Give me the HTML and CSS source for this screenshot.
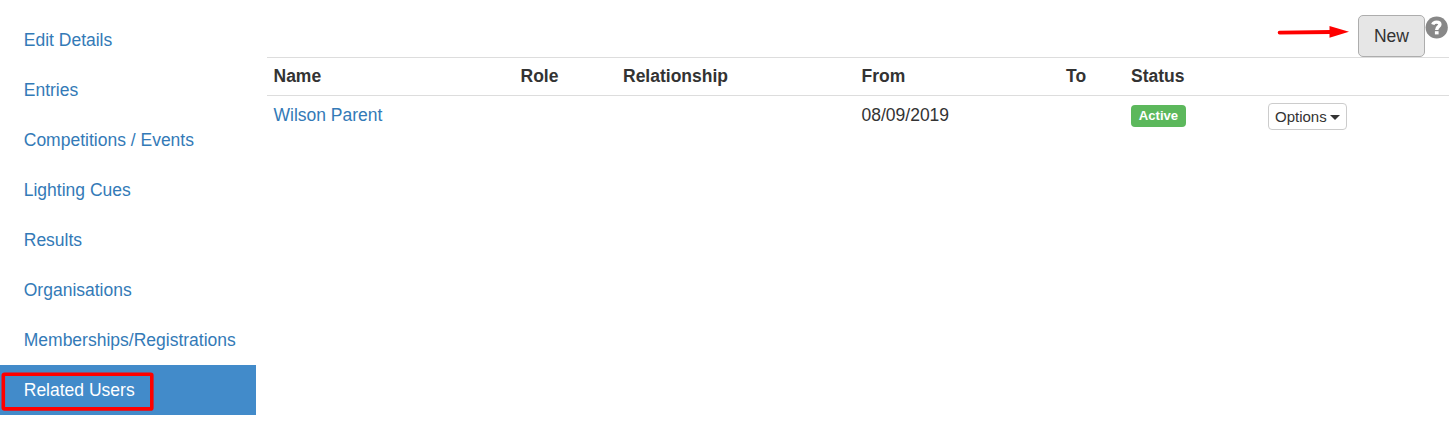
FILE: index.html
```
<!DOCTYPE html>
<html lang="en">
<head>
  <meta charset="UTF-8" />
  <meta name="viewport" content="width=device-width, initial-scale=1.0"/>
  <title>Related Users</title>
  <link rel="stylesheet" href="styles.css">
</head>
<body>
  <div class="page">
    <nav class="sidebar">
      <a href="#">Edit Details</a>
      <a href="#">Entries</a>
      <a href="#">Competitions / Events</a>
      <a href="#">Lighting Cues</a>
      <a href="#">Results</a>
      <a href="#">Organisations</a>
      <a href="#">Memberships/Registrations</a>
      <a href="#" class="active">Related Users
        <svg class="marker" width="153" height="40" viewBox="0 0 153 40">
          <rect x="2.3" y="2.3" width="148.5" height="34.6" rx="1" fill="none" stroke="#fe0000" stroke-width="3.6"/>
        </svg>
      </a>
    </nav>

    <main class="content">
      <div class="toolbar">
        <svg class="arrow" width="72" height="14" viewBox="0 0 72 14">
          <path d="M2.6 7.6 L54 7" stroke="#fe0000" stroke-width="3.8" stroke-linecap="round"/>
          <path d="M52.5 1 L72 6.7 L52.5 12.8 Z" fill="#fe0000"/>
        </svg>
        <button class="btn btn-new">New</button>
        <svg class="help" width="23" height="23" viewBox="0 0 23 23">
          <circle cx="11.7" cy="11.5" r="11.1" fill="#888"/>
          <path d="M7.8 8.6 C8.3 6.9 9.6 6.1 11.6 6.1 C13.9 6.1 14.9 7.1 14.9 8.5 C14.9 10.8 11.7 10.6 11.7 13.9" fill="none" stroke="#fff" stroke-width="3.4"/>
          <rect x="9.9" y="15.2" width="3.7" height="3.2" fill="#fff"/>
        </svg>
      </div>

      <table class="table">
        <thead>
          <tr>
            <th class="col-name">Name</th>
            <th class="col-role">Role</th>
            <th class="col-relationship">Relationship</th>
            <th class="col-from">From</th>
            <th class="col-to">To</th>
            <th class="col-status">Status</th>
            <th></th>
          </tr>
        </thead>
        <tbody>
          <tr>
            <td><a href="#">Wilson Parent</a></td>
            <td></td>
            <td></td>
            <td>08/09/2019</td>
            <td></td>
            <td><span class="label">Active</span></td>
            <td><button class="btn btn-options">Options <span class="caret"></span></button></td>
          </tr>
        </tbody>
      </table>
    </main>
  </div>
</body>
</html>
```
FILE: styles.css
```
* {
  box-sizing: border-box;
}

body {
  margin: 0;
  font-family: "Liberation Sans", Arial, sans-serif;
  font-size: 17.5px;
  line-height: 25px;
  color: #333;
  background: #fff;
}

a {
  color: #337ab7;
  text-decoration: none;
}

.page {
  display: flex;
  gap: 11px;
  padding: 15px 5px 0 0;
}

.sidebar {
  width: 256px;
}

.sidebar a {
  display: block;
  position: relative;
  height: 50px;
  padding: 12.5px 23.75px;
}

.sidebar .active {
  color: #fff;
  background: #428bca;
}

.marker {
  position: absolute;
  left: 1px;
  top: 7px;
}

.content {
  flex: 1;
}

.toolbar {
  display: flex;
  justify-content: flex-end;
  align-items: flex-start;
  height: 42px;
}

.arrow {
  margin: 10px 9px 0 0;
}

.help {
  margin: 1px 1px 0 0;
}

.btn {
  font-family: inherit;
  color: #333;
  background: #fff;
  border: 1px solid #ccc;
  cursor: pointer;
}

.btn-new {
  width: 67px;
  height: 42px;
  padding: 0;
  font-size: 17.5px;
  background: #e6e6e6;
  border-color: #adadad;
  border-radius: 5px;
}

.btn-options {
  display: flex;
  align-items: center;
  gap: 3px;
  width: 79px;
  height: 27px;
  padding: 0 6px;
  font-size: 15px;
  border-radius: 4px;
}

.caret {
  margin-top: 1px;
  border-top: 5px solid #333;
  border-left: 5px solid transparent;
  border-right: 5px solid transparent;
}

.table {
  width: 100%;
  table-layout: fixed;
  border-collapse: separate;
  border-spacing: 0;
}

.table th,
.table td {
  padding: 6px 6.5px;
  text-align: left;
  vertical-align: top;
  border-top: 1px solid #ddd;
}

.table td {
  padding-top: 7px;
}

.col-name {
  width: 247px;
}

.col-role {
  width: 102.5px;
}

.col-relationship {
  width: 238.5px;
}

.col-from {
  width: 204.5px;
}

.col-to {
  width: 65px;
}

.col-status {
  width: 137px;
}

.label {
  display: block;
  width: 55px;
  height: 22px;
  margin-top: 2px;
  font-size: 13.125px;
  font-weight: bold;
  line-height: 22px;
  text-align: center;
  color: #fff;
  background: #5cb85c;
  border-radius: 4px;
}
```
